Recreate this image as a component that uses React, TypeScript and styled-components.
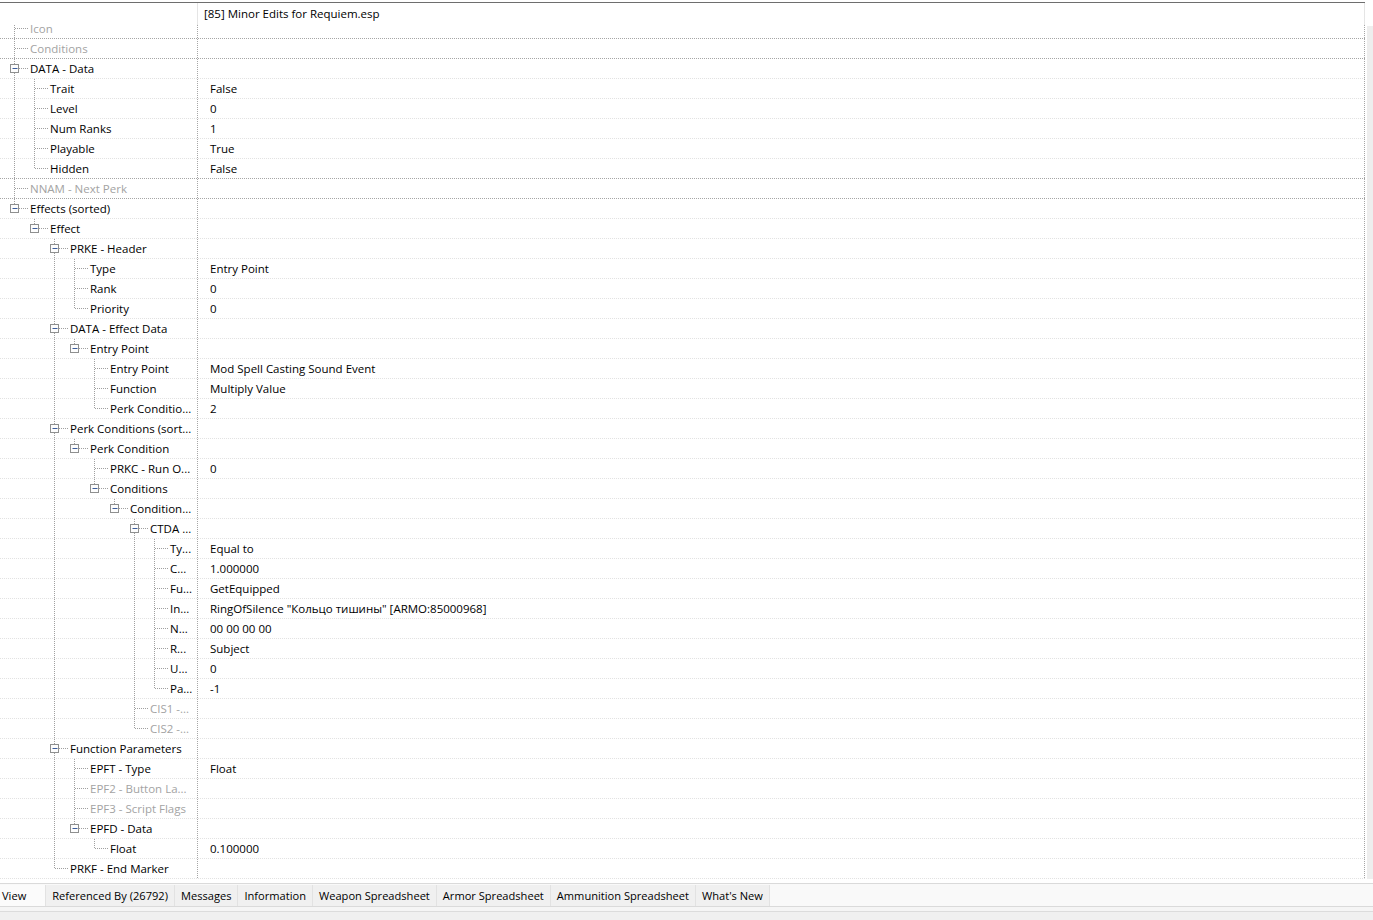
import React from "react";
import styled, { createGlobalStyle } from "styled-components";

const GlobalStyle = createGlobalStyle`
  html, body {
    margin: 0;
    padding: 0;
    background: #ffffff;
  }
  body {
    font-family: "Segoe UI", "Open Sans", "Noto Sans CJK SC", sans-serif;
    font-size: 11.5px;
    color: #000000;
  }
`;

type Node = {
  name: string;
  value?: string;
  gray?: boolean;
  strong?: boolean;
  children?: Node[];
};

type Row = {
  node: Node;
  level: number;
  guides: boolean[];
  hasNext: boolean;
};

const tree: Node[] = [
  { name: "Icon", gray: true, strong: true },
  { name: "Conditions", gray: true, strong: true },
  {
    name: "DATA - Data",
    children: [
      { name: "Trait", value: "False" },
      { name: "Level", value: "0" },
      { name: "Num Ranks", value: "1" },
      { name: "Playable", value: "True" },
      { name: "Hidden", value: "False", strong: true },
    ],
  },
  { name: "NNAM - Next Perk", gray: true, strong: true },
  {
    name: "Effects (sorted)",
    children: [
      {
        name: "Effect",
        children: [
          {
            name: "PRKE - Header",
            children: [
              { name: "Type", value: "Entry Point" },
              { name: "Rank", value: "0" },
              { name: "Priority", value: "0" },
            ],
          },
          {
            name: "DATA - Effect Data",
            children: [
              {
                name: "Entry Point",
                children: [
                  { name: "Entry Point", value: "Mod Spell Casting Sound Event" },
                  { name: "Function", value: "Multiply Value" },
                  { name: "Perk Conditio...", value: "2" },
                ],
              },
            ],
          },
          {
            name: "Perk Conditions (sort...",
            children: [
              {
                name: "Perk Condition",
                children: [
                  { name: "PRKC - Run O...", value: "0" },
                  {
                    name: "Conditions",
                    children: [
                      {
                        name: "Condition...",
                        children: [
                          {
                            name: "CTDA ...",
                            children: [
                              { name: "Ty...", value: "Equal to" },
                              { name: "C...", value: "1.000000" },
                              { name: "Fu...", value: "GetEquipped" },
                              {
                                name: "In...",
                                value: 'RingOfSilence "Кольцо тишины" [ARMO:85000968]',
                              },
                              { name: "N...", value: "00 00 00 00" },
                              { name: "R...", value: "Subject" },
                              { name: "U...", value: "0" },
                              { name: "Pa...", value: "-1" },
                            ],
                          },
                          { name: "CIS1 -...", gray: true },
                          { name: "CIS2 -...", gray: true },
                        ],
                      },
                    ],
                  },
                ],
              },
            ],
          },
          {
            name: "Function Parameters",
            children: [
              { name: "EPFT - Type", value: "Float" },
              { name: "EPF2 - Button La...", gray: true },
              { name: "EPF3 - Script Flags", gray: true },
              { name: "EPFD - Data", children: [{ name: "Float", value: "0.100000" }] },
            ],
          },
          { name: "PRKF - End Marker" },
        ],
      },
    ],
  },
];

function flatten(nodes: Node[], level: number, guides: boolean[], out: Row[]) {
  nodes.forEach((node, i) => {
    const hasNext = i < nodes.length - 1;
    out.push({ node, level, guides, hasNext });
    if (node.children) flatten(node.children, level + 1, [...guides, hasNext], out);
  });
  return out;
}

const rows = flatten(tree, 0, [], []);

const tabs = [
  "Referenced By (26792)",
  "Messages",
  "Information",
  "Weapon Spreadsheet",
  "Armor Spreadsheet",
  "Ammunition Spreadsheet",
  "What's New",
];

const Page = styled.div`
  width: 1373px;
  height: 920px;
  display: flex;
  flex-direction: column;
  padding-top: 2px;
  box-sizing: border-box;
  overflow: hidden;
`;

const TreeArea = styled.div`
  display: flex;
  height: 877px;
  flex-shrink: 0;
`;

const Grid = styled.div`
  width: 1365px;
  border-top: 1px solid #6e6e6e;
  display: flex;
  flex-direction: column;
`;

const ScrollTrack = styled.div`
  width: 6px;
  margin-left: 2px;
  margin-top: 24px;
  height: 853px;
  background: #eeeeee;
`;

const Header = styled.div`
  display: flex;
  height: 22px;
  line-height: 22px;
  flex-shrink: 0;
`;

const HeaderCell = styled.div<{ $width?: number }>`
  ${(p) => (p.$width ? `width: ${p.$width}px;` : "flex: 1;")}
  box-sizing: border-box;
  border-right: 1px solid #e5e5e5;
  padding-left: 6px;
  white-space: nowrap;
  overflow: hidden;
`;

const Body = styled.div`
  height: 854px;
  overflow: hidden;
`;

const List = styled.div`
  margin-top: -6px;
  display: flex;
  flex-direction: column;
`;

const TreeRow = styled.div<{ $strong?: boolean }>`
  display: flex;
  height: 20px;
  flex-shrink: 0;
  box-sizing: border-box;
  border-bottom: 1px dotted ${(p) => (p.$strong ? "#a6a6a6" : "#e2e2e2")};
`;

const NameCell = styled.div<{ $gray?: boolean }>`
  width: 198px;
  flex-shrink: 0;
  box-sizing: border-box;
  border-right: 1px dotted #a6a6a6;
  display: flex;
  align-items: center;
  overflow: hidden;
  white-space: nowrap;
  color: ${(p) => (p.$gray ? "#a3a3a3" : "#000000")};
`;

const Label = styled.span`
  line-height: 19px;
`;

const ValueCell = styled.div`
  flex: 1;
  box-sizing: border-box;
  border-right: 1px dotted #a6a6a6;
  padding-left: 12px;
  line-height: 19px;
  white-space: nowrap;
  overflow: hidden;
`;

const Spacer = styled.div`
  height: 4px;
  flex-shrink: 0;
`;

const TabStrip = styled.div`
  display: flex;
  align-items: stretch;
  height: 22px;
  flex-shrink: 0;
  border-top: 1px solid #dadada;
  border-bottom: 1px solid #dadada;
  background: #f9f9f9;
  font-size: 11.1px;
`;

const Tab = styled.div<{ $active?: boolean }>`
  display: flex;
  align-items: center;
  white-space: nowrap;
  padding: ${(p) => (p.$active ? "0 19px 0 2px" : "0 6px")};
  background: ${(p) => (p.$active ? "#fbfbfb" : "#f0f0f0")};
  border-right: 1px solid #e2e2e2;
  margin-top: 1px;
`;

const StatusBar = styled.div`
  flex: 1;
  background: #f0f0f0;
  border-top: 4px solid #f5f5f5;
  box-shadow: inset 0 1px 0 #dcdcdc;
`;

const LINE = "#a0a0a0";

function Guides({ row }: { row: Row }) {
  const { level, guides, hasNext, node } = row;
  const width = 30 + 20 * level;
  const own = 14 + 20 * level + 0.5;
  const expandable = !!node.children;
  const dash = { stroke: LINE, strokeWidth: 1, strokeDasharray: "1 1" };
  return (
    <svg width={width} height={19} style={{ flexShrink: 0 }}>
      {guides.map((g, k) =>
        g ? (
          <line key={k} x1={14 + 20 * k + 0.5} y1={0} x2={14 + 20 * k + 0.5} y2={19} {...dash} />
        ) : null
      )}
      {expandable ? (
        <>
          <line x1={own} y1={0} x2={own} y2={5} {...dash} />
          {hasNext && <line x1={own} y1={14} x2={own} y2={19} {...dash} />}
          <line x1={own + 4.5} y1={9.5} x2={own + 13.5} y2={9.5} {...dash} />
          <rect x={own - 4} y={5.5} width={8} height={8} fill="#fdfdfd" stroke="#8e8f8f" />
          <line x1={own - 2} y1={9.5} x2={own + 3} y2={9.5} stroke="#3b5c9b" strokeWidth={1} />
        </>
      ) : (
        <>
          <line x1={own} y1={0} x2={own} y2={hasNext ? 19 : 10} {...dash} />
          <line x1={own + 0.5} y1={9.5} x2={own + 13.5} y2={9.5} {...dash} />
        </>
      )}
    </svg>
  );
}

export default function App() {
  return (
    <>
      <GlobalStyle />
      <Page>
        <TreeArea>
          <Grid>
            <Header>
              <HeaderCell $width={198} />
              <HeaderCell>[85] Minor Edits for Requiem.esp</HeaderCell>
            </Header>
            <Body>
              <List>
                {rows.map((row, i) => (
                  <TreeRow key={i} $strong={row.node.strong}>
                    <NameCell $gray={row.node.gray}>
                      <Guides row={row} />
                      <Label>{row.node.name}</Label>
                    </NameCell>
                    <ValueCell>{row.node.value}</ValueCell>
                  </TreeRow>
                ))}
              </List>
            </Body>
          </Grid>
          <ScrollTrack />
        </TreeArea>
        <Spacer />
        <TabStrip>
          <Tab $active>View</Tab>
          {tabs.map((t) => (
            <Tab key={t}>{t}</Tab>
          ))}
        </TabStrip>
        <StatusBar />
      </Page>
    </>
  );
}
